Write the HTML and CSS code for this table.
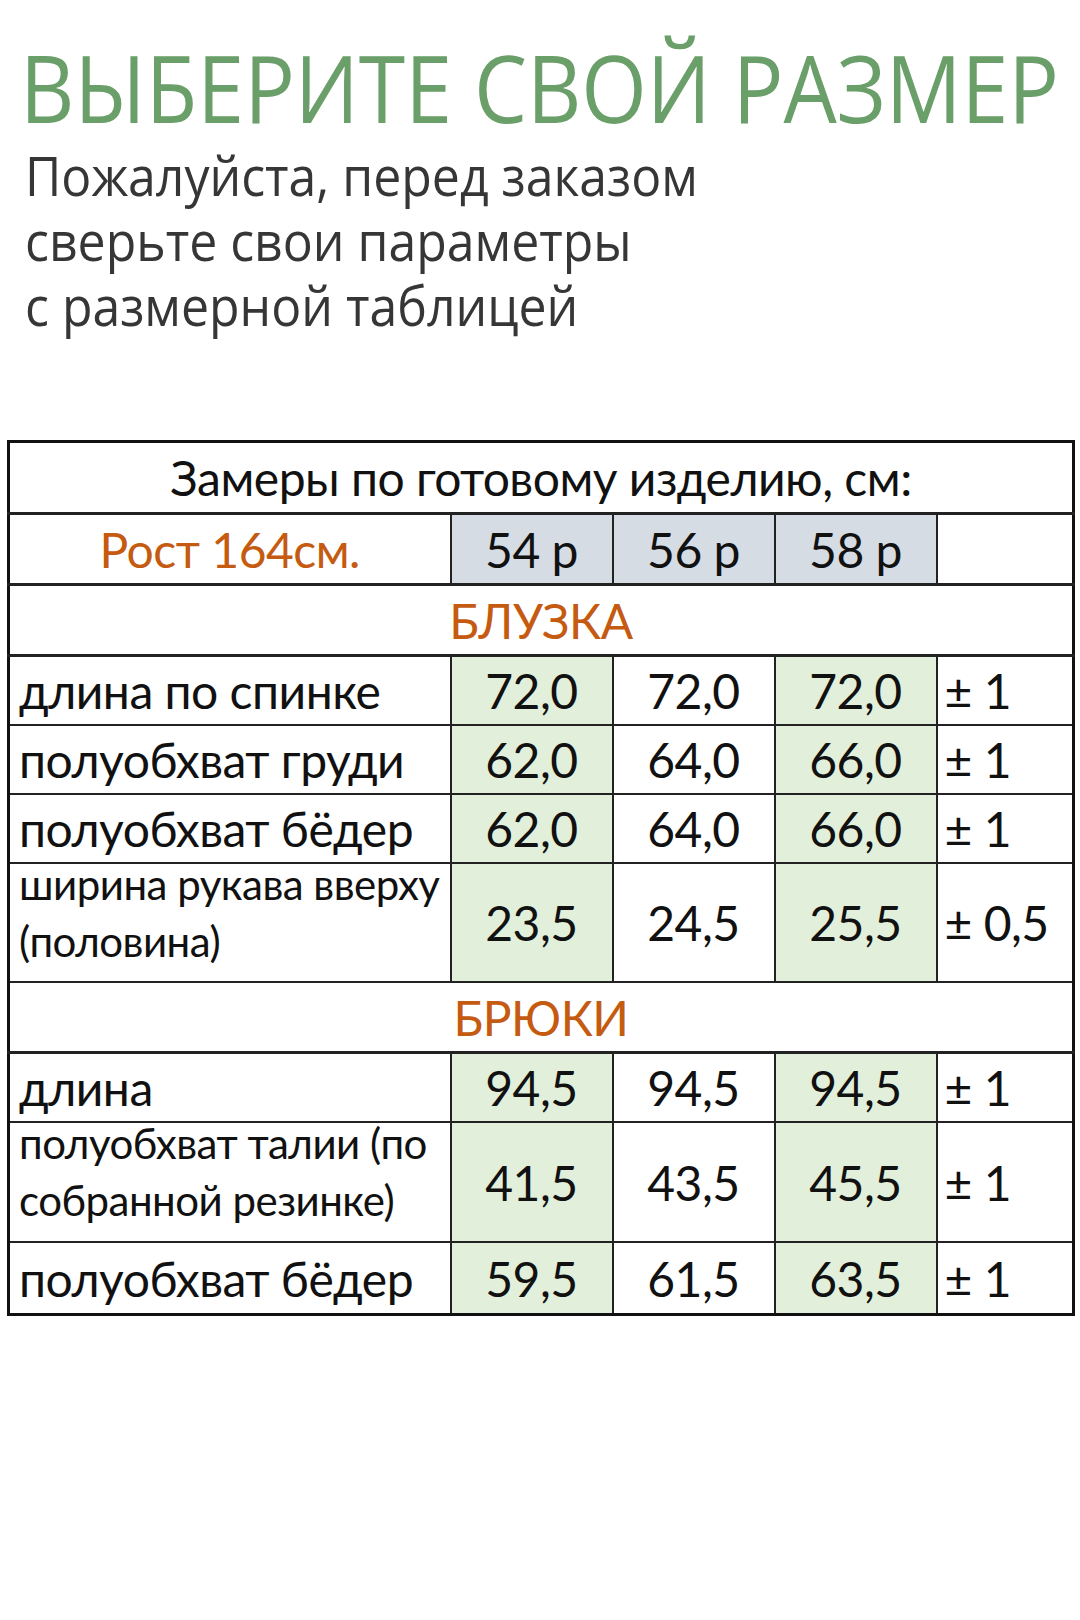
FILE: index.html
```html
<!DOCTYPE html>
<html lang="ru">
<head>
<meta charset="utf-8">
<title>Выберите свой размер</title>
<link rel="stylesheet" href="styles.css">
</head>
<body>
<div class="page">
  <h1 class="title">ВЫБЕРИТЕ СВОЙ РАЗМЕР</h1>
  <p class="subtitle">Пожалуйста, перед заказом<br>сверьте свои параметры<br>с размерной таблицей</p>

  <table class="sizes">
    <colgroup>
      <col class="c-label">
      <col class="c-size">
      <col class="c-size">
      <col class="c-size">
      <col class="c-tol">
    </colgroup>
    <tr class="r-head">
      <td colspan="5" class="center">Замеры по готовому изделию, см:</td>
    </tr>
    <tr class="r-size">
      <td class="center orange">Рост 164см.</td>
      <td class="center bluegray">54 р</td>
      <td class="center bluegray">56 р</td>
      <td class="center bluegray">58 р</td>
      <td></td>
    </tr>
    <tr class="r-section">
      <td colspan="5" class="center orange">БЛУЗКА</td>
    </tr>
    <tr class="r-one">
      <td class="label">длина по спинке</td>
      <td class="center green">72,0</td>
      <td class="center">72,0</td>
      <td class="center green">72,0</td>
      <td class="tol">± 1</td>
    </tr>
    <tr class="r-one">
      <td class="label">полуобхват груди</td>
      <td class="center green">62,0</td>
      <td class="center">64,0</td>
      <td class="center green">66,0</td>
      <td class="tol">± 1</td>
    </tr>
    <tr class="r-one">
      <td class="label">полуобхват бёдер</td>
      <td class="center green">62,0</td>
      <td class="center">64,0</td>
      <td class="center green">66,0</td>
      <td class="tol">± 1</td>
    </tr>
    <tr class="r-two">
      <td class="label two"><div class="wrap">ширина рукава вверху<br>(половина)</div></td>
      <td class="center green">23,5</td>
      <td class="center">24,5</td>
      <td class="center green">25,5</td>
      <td class="tol">± 0,5</td>
    </tr>
    <tr class="r-section">
      <td colspan="5" class="center orange">БРЮКИ</td>
    </tr>
    <tr class="r-one">
      <td class="label">длина</td>
      <td class="center green">94,5</td>
      <td class="center">94,5</td>
      <td class="center green">94,5</td>
      <td class="tol">± 1</td>
    </tr>
    <tr class="r-two r-two-b">
      <td class="label two"><div class="wrap">полуобхват талии (по<br>собранной резинке)</div></td>
      <td class="center green">41,5</td>
      <td class="center">43,5</td>
      <td class="center green">45,5</td>
      <td class="tol">± 1</td>
    </tr>
    <tr class="r-last">
      <td class="label">полуобхват бёдер</td>
      <td class="center green">59,5</td>
      <td class="center">61,5</td>
      <td class="center green">63,5</td>
      <td class="tol">± 1</td>
    </tr>
  </table>
</div>
</body>
</html>
```

FILE: styles.css
```css
html, body {
  margin: 0;
  padding: 0;
  background: #ffffff;
}

.page {
  width: 1080px;
  height: 1620px;
  overflow: hidden;
}

.title {
  margin: 40px 0 0 20px;
  font-family: "Open Sans", "DejaVu Sans", sans-serif;
  font-weight: 400;
  font-size: 94px;
  line-height: 94px;
  color: #6a9f69;
  white-space: nowrap;
  transform: scaleX(0.896);
  transform-origin: 0 0;
}

.subtitle {
  margin: 8px 0 0 25px;
  font-family: "Open Sans", "DejaVu Sans", sans-serif;
  font-weight: 400;
  font-size: 55px;
  line-height: 65px;
  color: #363636;
  white-space: nowrap;
  transform: scaleX(0.908);
  transform-origin: 0 0;
}

.sizes {
  margin: 103px 0 0 7px;
  width: 1065px;
  table-layout: fixed;
  border-collapse: collapse;
  border: 3px solid #111;
  font-family: "Lato", "Open Sans", sans-serif;
  font-size: 48px;
  letter-spacing: -0.5px;
  color: #111;
}

.c-label { width: 442px; }
.c-size { width: 162px; }
.c-tol { width: 137px; }

.sizes td {
  border: 2px solid #222;
  padding: 0;
  vertical-align: middle;
  line-height: 57px;
  white-space: nowrap;
}

.sizes td.two {
  font-size: 42px;
  line-height: 57px;
}

.wrap {
  margin-top: -20px;
}

.r-head td { height: 69px; border-bottom-width: 3px; }
.r-size td { height: 68px; border-bottom-width: 3px; }
.r-section td { height: 68px; border-bottom-width: 3px; }
.r-one td { height: 67px; }
.r-two td { height: 117px; }
.r-two-b td { height: 118px; }
.r-last td { height: 70px; }

.center { text-align: center; }
.label { padding-left: 9px !important; text-align: left; }
.tol { padding-left: 7px !important; text-align: left; }

.orange { color: #c55a11; }
.bluegray { background: #d6dce4; }
.green { background: #e2efda; }
```
